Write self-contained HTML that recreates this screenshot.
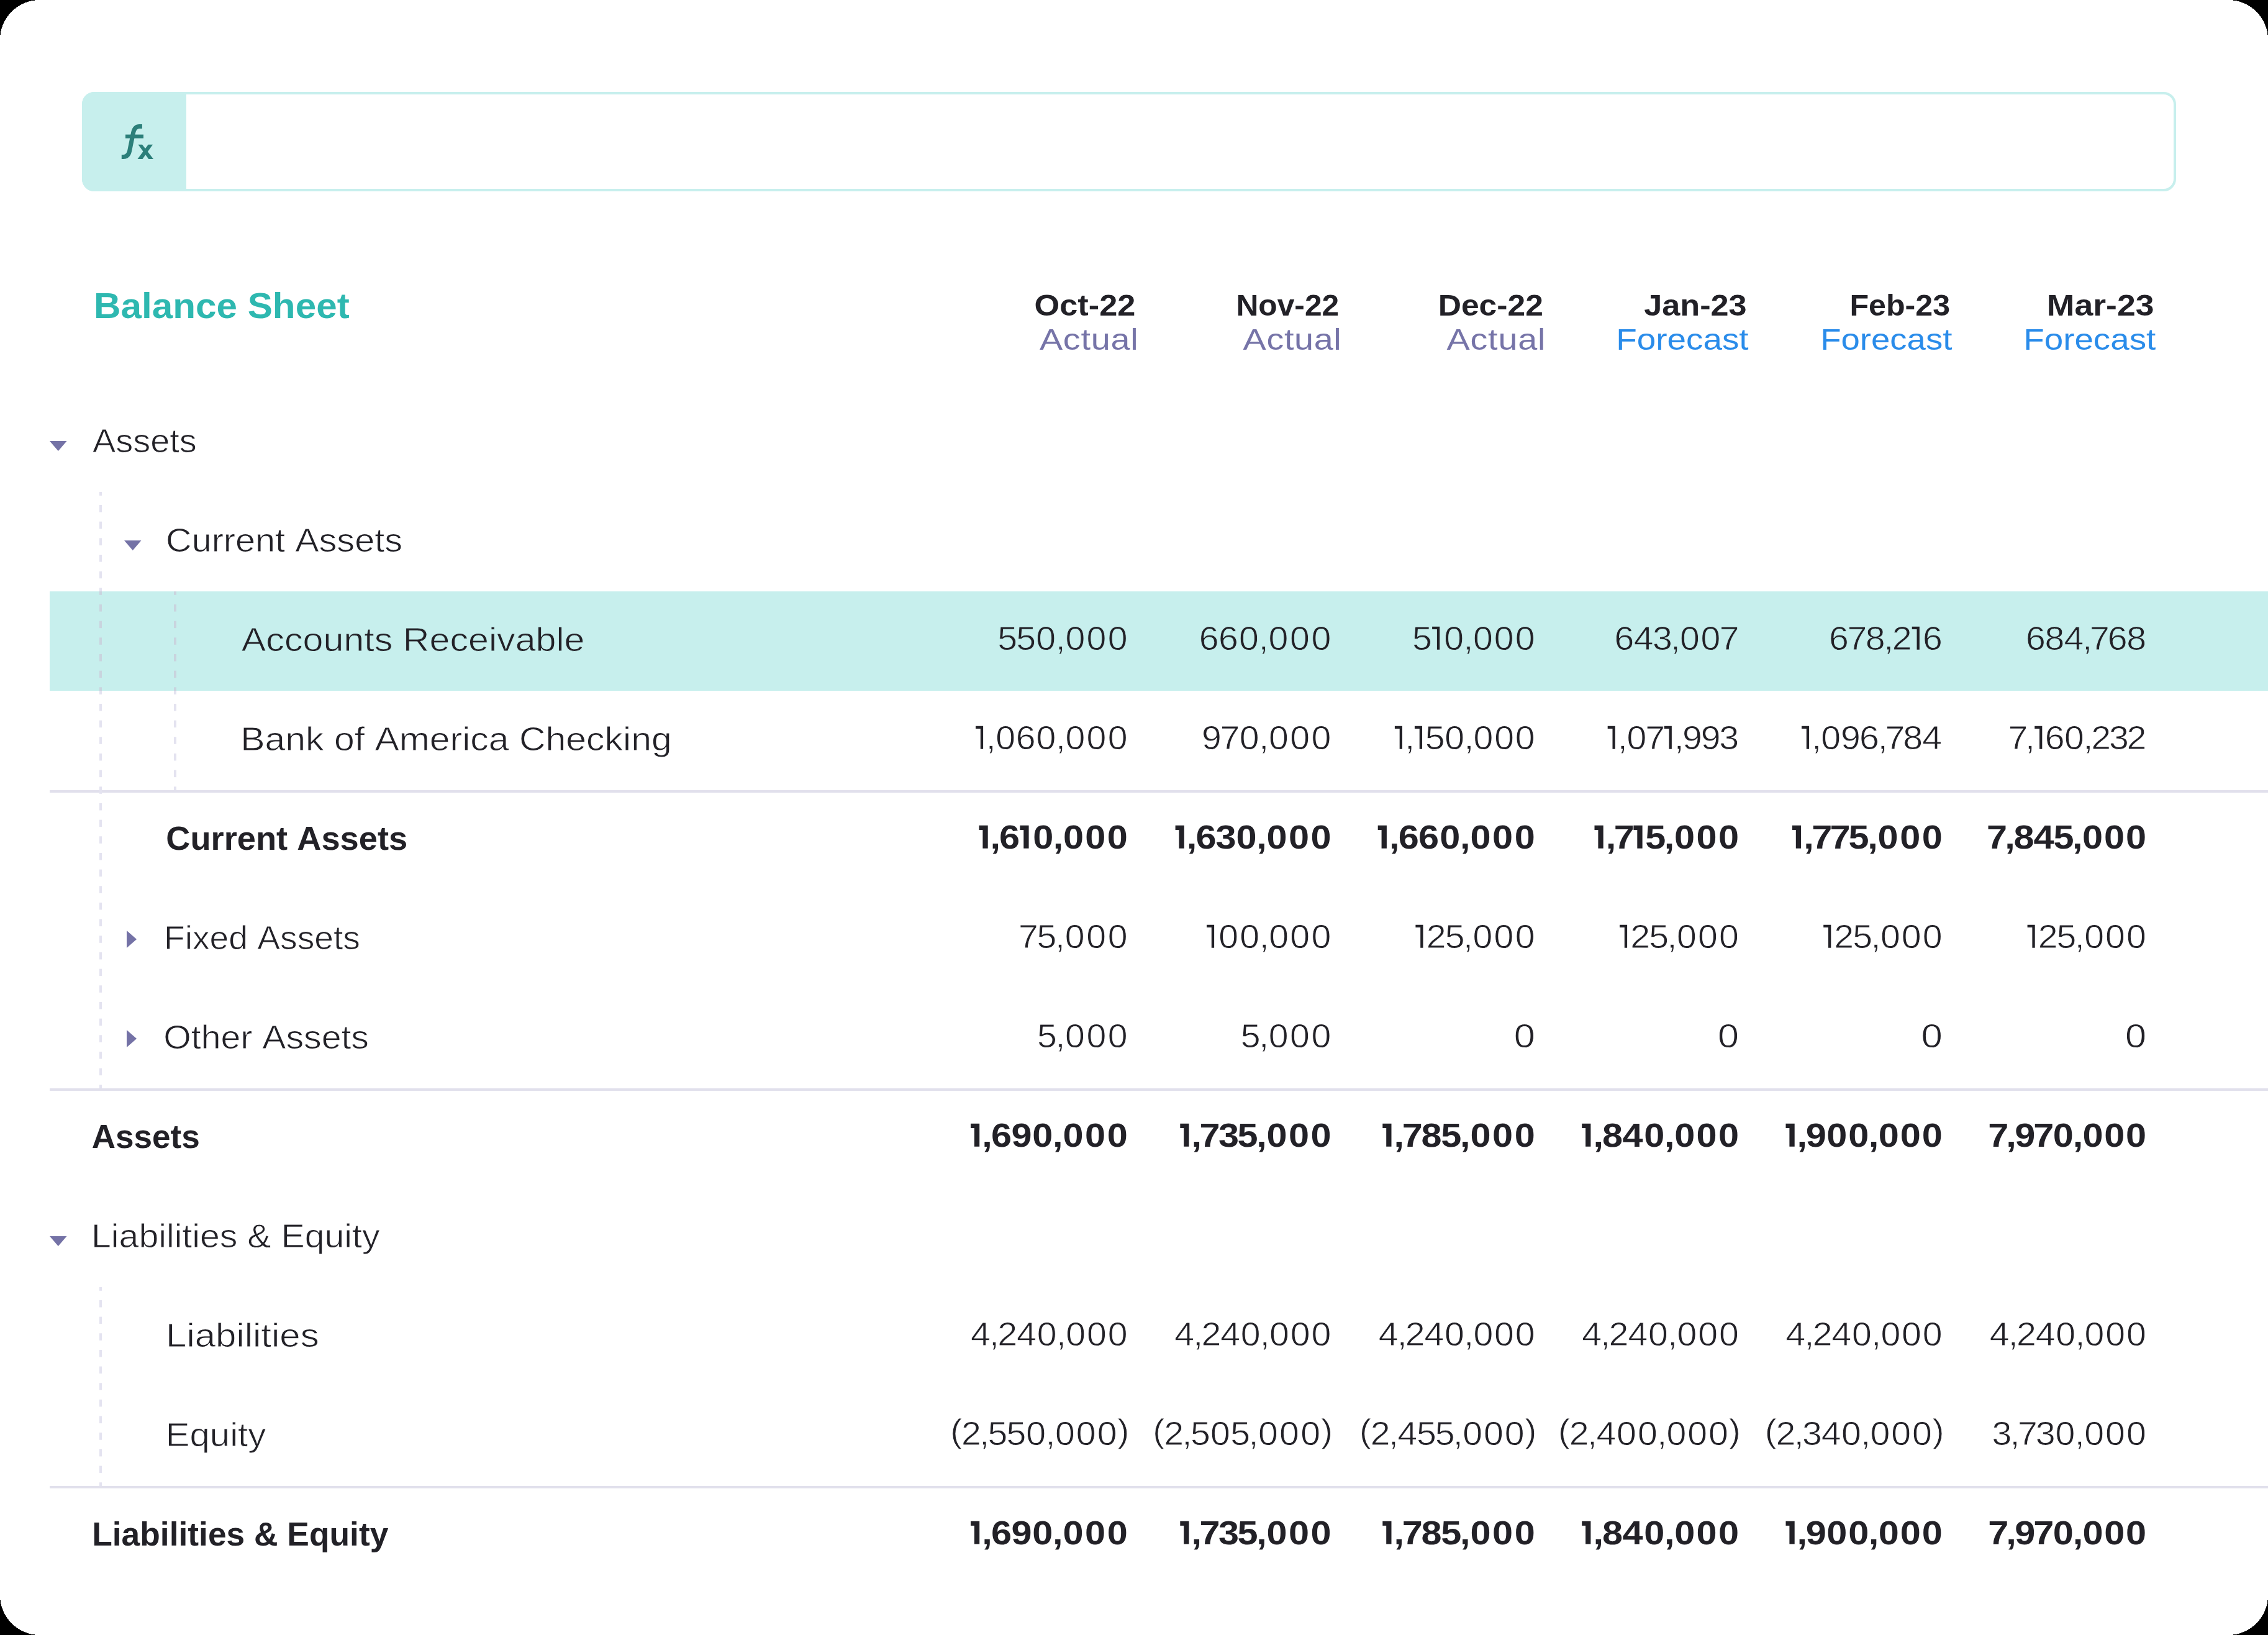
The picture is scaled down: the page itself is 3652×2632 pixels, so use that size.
<!DOCTYPE html>
<html><head><meta charset="utf-8"><style>
html,body{margin:0;padding:0;background:#000;width:3652px;height:2632px;overflow:hidden}
.card{position:absolute;left:0;top:0;width:3652px;height:2632px;background:#fff;overflow:hidden}
svg{position:absolute;left:0;top:0}
text{font-family:"Liberation Sans",sans-serif;font-kerning:none;white-space:pre}
</style></head><body><div class="card"><svg width="3652" height="2632" viewBox="0 0 3652 2632"><rect x="80" y="952" width="3572" height="160" fill="#C7EFED"/><rect x="80" y="1272" width="3572" height="4" fill="#E1E0EC"/><rect x="80" y="1752" width="3572" height="4" fill="#E1E0EC"/><rect x="80" y="2392" width="3572" height="4" fill="#E1E0EC"/><rect x="160" y="792.00" width="4" height="5.80" fill="#E4E3F0"/><rect x="160" y="812.97" width="4" height="11.50" fill="#E4E3F0"/><rect x="160" y="839.63" width="4" height="11.50" fill="#E4E3F0"/><rect x="160" y="866.30" width="4" height="11.50" fill="#E4E3F0"/><rect x="160" y="892.97" width="4" height="11.50" fill="#E4E3F0"/><rect x="160" y="919.63" width="4" height="11.50" fill="#E4E3F0"/><rect x="160" y="946.30" width="4" height="5.70" fill="#E4E3F0"/><rect x="160" y="952.00" width="4" height="5.80" fill="#C9D4DE"/><rect x="160" y="972.97" width="4" height="11.50" fill="#C9D4DE"/><rect x="160" y="999.63" width="4" height="11.50" fill="#C9D4DE"/><rect x="160" y="1026.30" width="4" height="11.50" fill="#C9D4DE"/><rect x="160" y="1052.97" width="4" height="11.50" fill="#C9D4DE"/><rect x="160" y="1079.63" width="4" height="11.50" fill="#C9D4DE"/><rect x="160" y="1106.30" width="4" height="5.70" fill="#C9D4DE"/><rect x="160" y="1112.00" width="4" height="5.80" fill="#E4E3F0"/><rect x="160" y="1132.97" width="4" height="11.50" fill="#E4E3F0"/><rect x="160" y="1159.63" width="4" height="11.50" fill="#E4E3F0"/><rect x="160" y="1186.30" width="4" height="11.50" fill="#E4E3F0"/><rect x="160" y="1212.97" width="4" height="11.50" fill="#E4E3F0"/><rect x="160" y="1239.63" width="4" height="11.50" fill="#E4E3F0"/><rect x="160" y="1266.30" width="4" height="11.50" fill="#E4E3F0"/><rect x="160" y="1292.97" width="4" height="11.50" fill="#E4E3F0"/><rect x="160" y="1319.63" width="4" height="11.50" fill="#E4E3F0"/><rect x="160" y="1346.30" width="4" height="11.50" fill="#E4E3F0"/><rect x="160" y="1372.97" width="4" height="11.50" fill="#E4E3F0"/><rect x="160" y="1399.63" width="4" height="11.50" fill="#E4E3F0"/><rect x="160" y="1426.30" width="4" height="11.50" fill="#E4E3F0"/><rect x="160" y="1452.97" width="4" height="11.50" fill="#E4E3F0"/><rect x="160" y="1479.63" width="4" height="11.50" fill="#E4E3F0"/><rect x="160" y="1506.30" width="4" height="11.50" fill="#E4E3F0"/><rect x="160" y="1532.97" width="4" height="11.50" fill="#E4E3F0"/><rect x="160" y="1559.63" width="4" height="11.50" fill="#E4E3F0"/><rect x="160" y="1586.30" width="4" height="11.50" fill="#E4E3F0"/><rect x="160" y="1612.97" width="4" height="11.50" fill="#E4E3F0"/><rect x="160" y="1639.63" width="4" height="11.50" fill="#E4E3F0"/><rect x="160" y="1666.30" width="4" height="11.50" fill="#E4E3F0"/><rect x="160" y="1692.97" width="4" height="11.50" fill="#E4E3F0"/><rect x="160" y="1719.63" width="4" height="11.50" fill="#E4E3F0"/><rect x="160" y="1746.30" width="4" height="5.70" fill="#E4E3F0"/><rect x="280" y="952.00" width="4" height="5.80" fill="#C9D4DE"/><rect x="280" y="972.97" width="4" height="11.50" fill="#C9D4DE"/><rect x="280" y="999.63" width="4" height="11.50" fill="#C9D4DE"/><rect x="280" y="1026.30" width="4" height="11.50" fill="#C9D4DE"/><rect x="280" y="1052.97" width="4" height="11.50" fill="#C9D4DE"/><rect x="280" y="1079.63" width="4" height="11.50" fill="#C9D4DE"/><rect x="280" y="1106.30" width="4" height="5.70" fill="#C9D4DE"/><rect x="280" y="1112.00" width="4" height="5.80" fill="#E4E3F0"/><rect x="280" y="1132.97" width="4" height="11.50" fill="#E4E3F0"/><rect x="280" y="1159.63" width="4" height="11.50" fill="#E4E3F0"/><rect x="280" y="1186.30" width="4" height="11.50" fill="#E4E3F0"/><rect x="280" y="1212.97" width="4" height="11.50" fill="#E4E3F0"/><rect x="280" y="1239.63" width="4" height="11.50" fill="#E4E3F0"/><rect x="280" y="1266.30" width="4" height="5.70" fill="#E4E3F0"/><rect x="160" y="2072.00" width="4" height="5.80" fill="#E4E3F0"/><rect x="160" y="2092.97" width="4" height="11.50" fill="#E4E3F0"/><rect x="160" y="2119.64" width="4" height="11.50" fill="#E4E3F0"/><rect x="160" y="2146.30" width="4" height="11.50" fill="#E4E3F0"/><rect x="160" y="2172.97" width="4" height="11.50" fill="#E4E3F0"/><rect x="160" y="2199.64" width="4" height="11.50" fill="#E4E3F0"/><rect x="160" y="2226.30" width="4" height="11.50" fill="#E4E3F0"/><rect x="160" y="2252.97" width="4" height="11.50" fill="#E4E3F0"/><rect x="160" y="2279.64" width="4" height="11.50" fill="#E4E3F0"/><rect x="160" y="2306.30" width="4" height="11.50" fill="#E4E3F0"/><rect x="160" y="2332.97" width="4" height="11.50" fill="#E4E3F0"/><rect x="160" y="2359.64" width="4" height="11.50" fill="#E4E3F0"/><rect x="160" y="2386.30" width="4" height="5.70" fill="#E4E3F0"/><path d="M80 710H107.5L93.75 726Z" fill="#7472A6"/><path d="M200 870H227.5L213.75 886Z" fill="#7472A6"/><path d="M80 1990H107.5L93.75 2006Z" fill="#7472A6"/><path d="M204 1498L220 1512.0L204 1526Z" fill="#7472A6"/><path d="M204 1658L220 1672.0L204 1686Z" fill="#7472A6"/><rect x="134" y="150" width="3368" height="156" rx="18" ry="18" fill="#fff" stroke="#C7EFED" stroke-width="4"/><path d="M152 148H300V308H152A20 20 0 0 1 132 288V168A20 20 0 0 1 152 148Z" fill="#C7EFED"/><path d="M195.8 252.4H198.8C204.5 252.4 207.3 249 208.6 243L214.6 213.5C216.1 206.5 219.6 203.5 224.5 203.5H228.9" fill="none" stroke="#2C7F7A" stroke-width="7"/><rect x="202" y="216.6" width="29" height="6" fill="#2C7F7A"/><path d="M222.5 232.7H229L247 256H239.3Z" fill="#2C7F7A"/><path d="M238.7 232.7H246L229.5 256H221.5Z" fill="#2C7F7A"/><text x="141.87" y="512.00" font-size="56.60" font-weight="700" fill="#2EB8B0" letter-spacing="0.000" transform="scale(1.0642,1)">Balance Sheet</text><text x="1552.47" y="508.50" font-size="48.80" font-weight="700" fill="#222127" letter-spacing="0.000" transform="scale(1.0728,1)">Oct-22</text><text x="1455.56" y="563.00" font-size="48.50" font-weight="400" fill="#7674A8" letter-spacing="0.665" transform="scale(1.1500,1)">Actual</text><text x="1953.32" y="508.50" font-size="48.80" font-weight="700" fill="#222127" letter-spacing="0.000" transform="scale(1.0190,1)">Nov-22</text><text x="1740.51" y="563.00" font-size="48.50" font-weight="400" fill="#7674A8" letter-spacing="0.543" transform="scale(1.1500,1)">Actual</text><text x="2190.15" y="508.50" font-size="48.80" font-weight="700" fill="#222127" letter-spacing="0.000" transform="scale(1.0573,1)">Dec-22</text><text x="2025.64" y="563.00" font-size="48.50" font-weight="400" fill="#7674A8" letter-spacing="0.683" transform="scale(1.1500,1)">Actual</text><text x="2473.53" y="508.50" font-size="48.80" font-weight="700" fill="#222127" letter-spacing="0.000" transform="scale(1.0702,1)">Jan-23</text><text x="2299.54" y="563.00" font-size="48.50" font-weight="400" fill="#2A8CEA" letter-spacing="0.000" transform="scale(1.1316,1)">Forecast</text><text x="2897.88" y="508.50" font-size="48.80" font-weight="700" fill="#222127" letter-spacing="0.000" transform="scale(1.0278,1)">Feb-23</text><text x="2606.45" y="563.00" font-size="48.50" font-weight="400" fill="#2A8CEA" letter-spacing="-0.000" transform="scale(1.1246,1)">Forecast</text><text x="3003.62" y="508.50" font-size="48.80" font-weight="700" fill="#222127" letter-spacing="0.000" transform="scale(1.0973,1)">Mar-23</text><text x="2886.26" y="563.00" font-size="48.50" font-weight="400" fill="#2A8CEA" letter-spacing="-0.000" transform="scale(1.1289,1)">Forecast</text><text x="141.02" y="728.00" font-size="53.00" font-weight="400" fill="#222127" letter-spacing="0.000" transform="scale(1.0558,1)" stroke="#fff" stroke-width="0.8">Assets</text><text x="245.69" y="888.00" font-size="53.00" font-weight="400" fill="#222127" letter-spacing="0.000" transform="scale(1.0870,1)" stroke="#fff" stroke-width="0.8">Current Assets</text><text x="348.21" y="1048.00" font-size="53.00" font-weight="400" fill="#222127" letter-spacing="0.000" transform="scale(1.1168,1)" stroke="#C7EFED" stroke-width="0.8">Accounts Receivable</text><text x="348.08" y="1208.00" font-size="53.00" font-weight="400" fill="#222127" letter-spacing="0.000" transform="scale(1.1123,1)" stroke="#fff" stroke-width="0.8">Bank of America Checking</text><text x="261.09" y="1368.00" font-size="53.00" font-weight="700" fill="#222127" letter-spacing="0.000" transform="scale(1.0237,1)">Current Assets</text><text x="253.41" y="1528.00" font-size="53.00" font-weight="400" fill="#222127" letter-spacing="0.000" transform="scale(1.0417,1)" stroke="#fff" stroke-width="0.8">Fixed Assets</text><text x="243.83" y="1688.00" font-size="53.00" font-weight="400" fill="#222127" letter-spacing="0.000" transform="scale(1.0798,1)" stroke="#fff" stroke-width="0.8">Other Assets</text><text x="147.45" y="1848.00" font-size="53.00" font-weight="700" fill="#222127" letter-spacing="0.000" transform="scale(1.0016,1)">Assets</text><text x="136.06" y="2008.00" font-size="53.00" font-weight="400" fill="#222127" letter-spacing="0.000" transform="scale(1.0804,1)" stroke="#fff" stroke-width="0.8">Liabilities &amp; Equity</text><text x="236.13" y="2168.00" font-size="53.00" font-weight="400" fill="#222127" letter-spacing="0.000" transform="scale(1.1311,1)" stroke="#fff" stroke-width="0.8">Liabilities</text><text x="243.41" y="2328.00" font-size="53.00" font-weight="400" fill="#222127" letter-spacing="0.000" transform="scale(1.0962,1)" stroke="#fff" stroke-width="0.8">Equity</text><text x="147.26" y="2488.00" font-size="53.00" font-weight="700" fill="#222127" letter-spacing="0.000" transform="scale(1.0066,1)">Liabilities &amp; Equity</text><text x="1515.39 1543.69 1573.90 1603.62 1618.31 1650.53 1682.74" y="1045.80 1045.80 1045.80 1045.80 1045.80 1045.80 1045.80" font-size="54.00" font-weight="400" fill="#222127" transform="scale(1.0600,1)" stroke="#C7EFED" stroke-width="0.8">550,000</text><text x="1821.41 1850.94 1882.13 1912.04 1926.92 1959.40 1991.89" y="1045.80 1045.80 1045.80 1045.80 1045.80 1045.80 1045.80" font-size="54.00" font-weight="400" fill="#222127" transform="scale(1.0600,1)" stroke="#C7EFED" stroke-width="0.8">660,000</text><text x="2145.29 2193.65 2223.19 2237.70 2269.65 2301.61" y="1045.80 1045.80 1045.80 1045.80 1045.80 1045.80" font-size="54.00" font-weight="400" fill="#222127" transform="scale(1.0600,1)" stroke="#C7EFED" stroke-width="0.8">50,000</text><path d="M2306.11 1008.65H2318.21V1045.80H2313.91V1013.05H2306.11Z" fill="#222127"/><text x="2452.35 2481.84 2510.48 2537.66 2551.87 2583.39 2612.02" y="1045.80 1045.80 1045.80 1045.80 1045.80 1045.80 1045.80" font-size="54.00" font-weight="400" fill="#222127" transform="scale(1.0600,1)" stroke="#C7EFED" stroke-width="0.8">643,007</text><text x="2778.39 2806.07 2833.62 2861.66 2874.18 2920.83" y="1045.80 1045.80 1045.80 1045.80 1045.80 1045.80" font-size="54.00" font-weight="400" fill="#222127" transform="scale(1.0600,1)" stroke="#C7EFED" stroke-width="0.8">678,26</text><path d="M3078.73 1008.65H3090.83V1045.80H3086.53V1013.05H3078.73Z" fill="#222127"/><text x="3077.45 3106.17 3135.36 3163.40 3174.65 3201.61 3230.33" y="1045.80 1045.80 1045.80 1045.80 1045.80 1045.80 1045.80" font-size="54.00" font-weight="400" fill="#222127" transform="scale(1.0600,1)" stroke="#C7EFED" stroke-width="0.8">684,768</text><text x="1497.87 1512.54 1543.08 1573.99 1603.69 1618.37 1650.55 1682.74" y="1205.80 1205.80 1205.80 1205.80 1205.80 1205.80 1205.80 1205.80" font-size="54.00" font-weight="400" fill="#222127" transform="scale(1.0600,1)" stroke="#fff" stroke-width="0.8">,060,000</text><path d="M1571.00 1168.65H1583.10V1205.80H1578.80V1173.05H1571.00Z" fill="#222127"/><text x="1825.49 1853.35 1882.74 1912.53 1927.28 1959.58 1991.89" y="1205.80 1205.80 1205.80 1205.80 1205.80 1205.80 1205.80" font-size="54.00" font-weight="400" fill="#222127" transform="scale(1.0600,1)" stroke="#fff" stroke-width="0.8">970,000</text><text x="2134.28 2164.95 2194.64 2223.98 2238.29 2269.95 2301.61" y="1205.80 1205.80 1205.80 1205.80 1205.80 1205.80 1205.80" font-size="54.00" font-weight="400" fill="#222127" transform="scale(1.0600,1)" stroke="#fff" stroke-width="0.8">,50,000</text><path d="M2245.90 1168.65H2258.00V1205.80H2253.70V1173.05H2245.90Z" fill="#222127"/><path d="M2277.93 1168.65H2290.03V1205.80H2285.73V1173.05H2277.93Z" fill="#222127"/><text x="2457.30 2471.15 2499.29 2543.22 2555.67 2583.84 2611.68" y="1205.80 1205.80 1205.80 1205.80 1205.80 1205.80 1205.80" font-size="54.00" font-weight="400" fill="#222127" transform="scale(1.0600,1)" stroke="#fff" stroke-width="0.8">,07,993</text><path d="M2588.70 1168.65H2600.80V1205.80H2596.50V1173.05H2588.70Z" fill="#222127"/><path d="M2679.77 1168.65H2691.87V1205.80H2687.57V1173.05H2679.77Z" fill="#222127"/><text x="2752.15 2766.27 2796.24 2824.58 2852.49 2863.73 2890.86 2920.04" y="1205.80 1205.80 1205.80 1205.80 1205.80 1205.80 1205.80 1205.80" font-size="54.00" font-weight="400" fill="#222127" transform="scale(1.0600,1)" stroke="#fff" stroke-width="0.8">,096,784</text><path d="M2901.00 1168.65H2913.10V1205.80H2908.80V1173.05H2901.00Z" fill="#222127"/><text x="3050.44 3076.42 3106.31 3135.91 3164.67 3176.54 3203.78 3230.70" y="1205.80 1205.80 1205.80 1205.80 1205.80 1205.80 1205.80 1205.80" font-size="54.00" font-weight="400" fill="#222127" transform="scale(1.0600,1)" stroke="#fff" stroke-width="0.8">7,60,232</text><path d="M3276.24 1168.65H3288.34V1205.80H3284.04V1173.05H3276.24Z" fill="#222127"/><text x="1449.66 1462.85 1512.07 1541.67 1556.38 1588.51 1620.64" y="1365.80 1365.80 1365.80 1365.80 1365.80 1365.80 1365.80" font-size="54.00" font-weight="700" fill="#222127" transform="scale(1.1000,1)">,60,000</text><path d="M1576.50 1328.65H1590.70V1365.80H1582.40V1335.95H1576.50Z" fill="#222127"/><path d="M1642.37 1328.65H1656.57V1365.80H1648.27V1335.95H1642.37Z" fill="#222127"/><text x="1737.10 1750.37 1779.57 1809.56 1839.24 1854.03 1886.29 1918.55" y="1365.80 1365.80 1365.80 1365.80 1365.80 1365.80 1365.80 1365.80" font-size="54.00" font-weight="700" fill="#222127" transform="scale(1.1000,1)">,630,000</text><path d="M1892.60 1328.65H1906.80V1365.80H1898.50V1335.95H1892.60Z" fill="#222127"/><text x="2033.64 2047.01 2076.48 2107.47 2137.27 2152.17 2184.58 2217.00" y="1365.80 1365.80 1365.80 1365.80 1365.80 1365.80 1365.80 1365.80" font-size="54.00" font-weight="700" fill="#222127" transform="scale(1.1000,1)">,660,000</text><path d="M2218.70 1328.65H2232.90V1365.80H2224.60V1335.95H2218.70Z" fill="#222127"/><text x="2350.65 2362.50 2408.35 2436.21 2451.01 2483.28 2515.55" y="1365.80 1365.80 1365.80 1365.80 1365.80 1365.80 1365.80" font-size="54.00" font-weight="700" fill="#222127" transform="scale(1.1000,1)">,75,000</text><path d="M2567.50 1328.65H2581.70V1365.80H2573.40V1335.95H2567.50Z" fill="#222127"/><path d="M2630.42 1328.65H2644.62V1365.80H2636.32V1335.95H2630.42Z" fill="#222127"/><text x="2640.16 2652.07 2678.56 2705.92 2733.84 2748.71 2781.08 2813.46" y="1365.80 1365.80 1365.80 1365.80 1365.80 1365.80 1365.80 1365.80" font-size="54.00" font-weight="700" fill="#222127" transform="scale(1.1000,1)">,775,000</text><path d="M2885.90 1328.65H2900.10V1365.80H2891.80V1335.95H2885.90Z" fill="#222127"/><text x="2908.23 2934.73 2947.71 2976.89 3006.01 3033.59 3048.08 3079.90 3111.73" y="1365.80 1365.80 1365.80 1365.80 1365.80 1365.80 1365.80 1365.80 1365.80" font-size="54.00" font-weight="700" fill="#222127" transform="scale(1.1000,1)">7,845,000</text><text x="1547.23 1574.90 1602.81 1617.71 1650.22 1682.74" y="1525.80 1525.80 1525.80 1525.80 1525.80 1525.80" font-size="54.00" font-weight="400" fill="#222127" transform="scale(1.0600,1)" stroke="#fff" stroke-width="0.8">75,000</text><text x="1851.24 1883.36 1913.02 1927.65 1959.77 1991.89" y="1525.80 1525.80 1525.80 1525.80 1525.80 1525.80" font-size="54.00" font-weight="400" fill="#222127" transform="scale(1.0600,1)" stroke="#fff" stroke-width="0.8">00,000</text><path d="M1943.00 1488.65H1955.10V1525.80H1950.80V1493.05H1943.00Z" fill="#222127"/><text x="2166.67 2194.98 2222.66 2237.31 2269.46 2301.61" y="1525.80 1525.80 1525.80 1525.80 1525.80 1525.80" font-size="54.00" font-weight="400" fill="#222127" transform="scale(1.0600,1)" stroke="#fff" stroke-width="0.8">25,000</text><path d="M2279.40 1488.65H2291.50V1525.80H2287.20V1493.05H2279.40Z" fill="#222127"/><text x="2476.64 2504.91 2532.57 2547.19 2579.30 2611.42" y="1525.80 1525.80 1525.80 1525.80 1525.80 1525.80" font-size="54.00" font-weight="400" fill="#222127" transform="scale(1.0600,1)" stroke="#fff" stroke-width="0.8">25,000</text><path d="M2608.00 1488.65H2620.10V1525.80H2615.80V1493.05H2608.00Z" fill="#222127"/><text x="2786.19 2814.38 2841.97 2856.53 2888.55 2920.57" y="1525.80 1525.80 1525.80 1525.80 1525.80 1525.80" font-size="54.00" font-weight="400" fill="#222127" transform="scale(1.0600,1)" stroke="#fff" stroke-width="0.8">25,000</text><path d="M2936.20 1488.65H2948.30V1525.80H2944.00V1493.05H2936.20Z" fill="#222127"/><text x="3095.96 3124.10 3151.65 3166.17 3198.13 3230.10" y="1525.80 1525.80 1525.80 1525.80 1525.80 1525.80" font-size="54.00" font-weight="400" fill="#222127" transform="scale(1.0600,1)" stroke="#fff" stroke-width="0.8">25,000</text><path d="M3264.60 1488.65H3276.70V1525.80H3272.40V1493.05H3264.60Z" fill="#222127"/><text x="1575.39 1603.20 1618.00 1650.37 1682.74" y="1685.80 1685.80 1685.80 1685.80 1685.80" font-size="54.00" font-weight="400" fill="#222127" transform="scale(1.0600,1)" stroke="#fff" stroke-width="0.8">5,000</text><text x="1884.63 1912.43 1927.21 1959.55 1991.89" y="1685.80 1685.80 1685.80 1685.80 1685.80" font-size="54.00" font-weight="400" fill="#222127" transform="scale(1.0600,1)" stroke="#fff" stroke-width="0.8">5,000</text><text x="2147.55" y="1685.80" font-size="54.00" font-weight="400" fill="#222127" letter-spacing="0.000" transform="scale(1.1351,1)" stroke="#fff" stroke-width="0.8">0</text><text x="2445.31" y="1685.80" font-size="54.00" font-weight="400" fill="#222127" letter-spacing="0.000" transform="scale(1.1312,1)" stroke="#fff" stroke-width="0.8">0</text><text x="2706.91" y="1685.80" font-size="54.00" font-weight="400" fill="#222127" letter-spacing="0.000" transform="scale(1.1428,1)" stroke="#fff" stroke-width="0.8">0</text><text x="3014.63" y="1685.80" font-size="54.00" font-weight="400" fill="#222127" letter-spacing="0.000" transform="scale(1.1351,1)" stroke="#fff" stroke-width="0.8">0</text><text x="1437.52 1450.87 1480.38 1511.25 1541.02 1555.89 1588.26 1620.64" y="1845.80 1845.80 1845.80 1845.80 1845.80 1845.80 1845.80 1845.80" font-size="54.00" font-weight="700" fill="#222127" transform="scale(1.1000,1)">,690,000</text><path d="M1563.00 1808.65H1577.20V1845.80H1568.90V1815.95H1563.00Z" fill="#222127"/><text x="1744.08 1755.91 1783.59 1811.48 1839.31 1854.08 1886.31 1918.55" y="1845.80 1845.80 1845.80 1845.80 1845.80 1845.80 1845.80 1845.80" font-size="54.00" font-weight="700" fill="#222127" transform="scale(1.1000,1)">,735,000</text><path d="M1900.30 1808.65H1914.50V1845.80H1906.20V1815.95H1900.30Z" fill="#222127"/><text x="2040.54 2052.48 2080.42 2109.34 2137.28 2152.18 2184.59 2217.00" y="1845.80 1845.80 1845.80 1845.80 1845.80 1845.80 1845.80 1845.80" font-size="54.00" font-weight="700" fill="#222127" transform="scale(1.1000,1)">,785,000</text><path d="M2226.30 1808.65H2240.50V1845.80H2232.20V1815.95H2226.30Z" fill="#222127"/><text x="2332.18 2345.44 2375.00 2406.58 2436.26 2451.05 2483.30 2515.55" y="1845.80 1845.80 1845.80 1845.80 1845.80 1845.80 1845.80 1845.80" font-size="54.00" font-weight="700" fill="#222127" transform="scale(1.1000,1)">,840,000</text><path d="M2547.20 1808.65H2561.40V1845.80H2553.10V1815.95H2547.20Z" fill="#222127"/><text x="2630.43 2643.53 2673.92 2705.78 2735.20 2749.72 2781.59 2813.46" y="1845.80 1845.80 1845.80 1845.80 1845.80 1845.80 1845.80 1845.80" font-size="54.00" font-weight="700" fill="#222127" transform="scale(1.1000,1)">,900,000</text><path d="M2875.50 1808.65H2889.70V1845.80H2881.40V1815.95H2875.50Z" fill="#222127"/><text x="2910.23 2936.55 2949.42 2976.59 3005.25 3034.43 3048.70 3080.22 3111.73" y="1845.80 1845.80 1845.80 1845.80 1845.80 1845.80 1845.80 1845.80 1845.80" font-size="54.00" font-weight="700" fill="#222127" transform="scale(1.1000,1)">7,970,000</text><text x="1474.52 1502.84 1515.35 1544.46 1575.16 1604.63 1619.06 1650.90 1682.74" y="2165.80 2165.80 2165.80 2165.80 2165.80 2165.80 2165.80 2165.80 2165.80" font-size="54.00" font-weight="400" fill="#222127" transform="scale(1.0600,1)" stroke="#fff" stroke-width="0.8">4,240,000</text><text x="1784.23 1812.50 1824.95 1853.99 1884.61 1914.01 1928.39 1960.14 1991.89" y="2165.80 2165.80 2165.80 2165.80 2165.80 2165.80 2165.80 2165.80 2165.80" font-size="54.00" font-weight="400" fill="#222127" transform="scale(1.0600,1)" stroke="#fff" stroke-width="0.8">4,240,000</text><text x="2094.04 2122.30 2134.75 2163.77 2194.37 2223.77 2238.13 2269.87 2301.61" y="2165.80 2165.80 2165.80 2165.80 2165.80 2165.80 2165.80 2165.80 2165.80" font-size="54.00" font-weight="400" fill="#222127" transform="scale(1.0600,1)" stroke="#fff" stroke-width="0.8">4,240,000</text><text x="2403.10 2431.44 2443.95 2473.08 2503.79 2533.27 2547.71 2579.56 2611.42" y="2165.80 2165.80 2165.80 2165.80 2165.80 2165.80 2165.80 2165.80 2165.80" font-size="54.00" font-weight="400" fill="#222127" transform="scale(1.0600,1)" stroke="#fff" stroke-width="0.8">4,240,000</text><text x="2712.82 2741.10 2753.56 2782.61 2813.24 2842.65 2857.04 2888.80 2920.57" y="2165.80 2165.80 2165.80 2165.80 2165.80 2165.80 2165.80 2165.80 2165.80" font-size="54.00" font-weight="400" fill="#222127" transform="scale(1.0600,1)" stroke="#fff" stroke-width="0.8">4,240,000</text><text x="3022.53 3050.80 3063.24 3092.26 3122.86 3152.26 3166.62 3198.36 3230.10" y="2165.80 2165.80 2165.80 2165.80 2165.80 2165.80 2165.80 2165.80 2165.80" font-size="54.00" font-weight="400" fill="#222127" transform="scale(1.0600,1)" stroke="#fff" stroke-width="0.8">4,240,000</text><text x="1443.54 1460.34 1487.95 1500.59 1528.68 1558.65 1588.20 1602.73 1634.69 1666.65 1697.44" y="2321.80 2325.80 2325.80 2325.80 2325.80 2325.80 2325.80 2325.80 2325.80 2325.80 2321.80" font-size="54.00" font-weight="400" fill="#222127" transform="scale(1.0600,1)" stroke="#fff" stroke-width="0.8">(2,550,000)</text><text x="1751.18 1768.11 1795.84 1808.60 1838.76 1869.02 1896.70 1911.35 1943.51 1975.66 2006.59" y="2321.80 2325.80 2325.80 2325.80 2325.80 2325.80 2325.80 2325.80 2325.80 2325.80 2321.80" font-size="54.00" font-weight="400" fill="#222127" transform="scale(1.0600,1)" stroke="#fff" stroke-width="0.8">(2,505,000)</text><text x="2065.14 2081.87 2109.42 2123.08 2151.93 2179.93 2207.42 2221.87 2253.73 2285.60 2316.31" y="2321.80 2325.80 2325.80 2325.80 2325.80 2325.80 2325.80 2325.80 2325.80 2325.80 2321.80" font-size="54.00" font-weight="400" fill="#222127" transform="scale(1.0600,1)" stroke="#fff" stroke-width="0.8">(2,455,000)</text><text x="2367.03 2383.78 2411.34 2425.02 2455.76 2487.65 2517.15 2531.62 2563.50 2595.39 2626.12" y="2321.80 2325.80 2325.80 2325.80 2325.80 2325.80 2325.80 2325.80 2325.80 2325.80 2321.80" font-size="54.00" font-weight="400" fill="#222127" transform="scale(1.0600,1)" stroke="#fff" stroke-width="0.8">(2,400,000)</text><text x="2680.99 2697.66 2725.15 2737.77 2766.66 2797.29 2826.71 2841.09 2872.86 2904.63 2935.27" y="2321.80 2325.80 2325.80 2325.80 2325.80 2325.80 2325.80 2325.80 2325.80 2325.80 2321.80" font-size="54.00" font-weight="400" fill="#222127" transform="scale(1.0600,1)" stroke="#fff" stroke-width="0.8">(2,340,000)</text><text x="3025.96 3053.41 3064.99 3092.28 3122.14 3151.68 3166.19 3198.15 3230.10" y="2325.80 2325.80 2325.80 2325.80 2325.80 2325.80 2325.80 2325.80 2325.80" font-size="54.00" font-weight="400" fill="#222127" transform="scale(1.0600,1)" stroke="#fff" stroke-width="0.8">3,730,000</text><text x="1437.52 1450.87 1480.38 1511.25 1541.02 1555.89 1588.26 1620.64" y="2485.80 2485.80 2485.80 2485.80 2485.80 2485.80 2485.80 2485.80" font-size="54.00" font-weight="700" fill="#222127" transform="scale(1.1000,1)">,690,000</text><path d="M1563.00 2448.65H1577.20V2485.80H1568.90V2455.95H1563.00Z" fill="#222127"/><text x="1744.08 1755.91 1783.59 1811.48 1839.31 1854.08 1886.31 1918.55" y="2485.80 2485.80 2485.80 2485.80 2485.80 2485.80 2485.80 2485.80" font-size="54.00" font-weight="700" fill="#222127" transform="scale(1.1000,1)">,735,000</text><path d="M1900.30 2448.65H1914.50V2485.80H1906.20V2455.95H1900.30Z" fill="#222127"/><text x="2040.54 2052.48 2080.42 2109.34 2137.28 2152.18 2184.59 2217.00" y="2485.80 2485.80 2485.80 2485.80 2485.80 2485.80 2485.80 2485.80" font-size="54.00" font-weight="700" fill="#222127" transform="scale(1.1000,1)">,785,000</text><path d="M2226.30 2448.65H2240.50V2485.80H2232.20V2455.95H2226.30Z" fill="#222127"/><text x="2332.18 2345.44 2375.00 2406.58 2436.26 2451.05 2483.30 2515.55" y="2485.80 2485.80 2485.80 2485.80 2485.80 2485.80 2485.80 2485.80" font-size="54.00" font-weight="700" fill="#222127" transform="scale(1.1000,1)">,840,000</text><path d="M2547.20 2448.65H2561.40V2485.80H2553.10V2455.95H2547.20Z" fill="#222127"/><text x="2630.43 2643.53 2673.92 2705.78 2735.20 2749.72 2781.59 2813.46" y="2485.80 2485.80 2485.80 2485.80 2485.80 2485.80 2485.80 2485.80" font-size="54.00" font-weight="700" fill="#222127" transform="scale(1.1000,1)">,900,000</text><path d="M2875.50 2448.65H2889.70V2485.80H2881.40V2455.95H2875.50Z" fill="#222127"/><text x="2910.23 2936.55 2949.42 2976.59 3005.25 3034.43 3048.70 3080.22 3111.73" y="2485.80 2485.80 2485.80 2485.80 2485.80 2485.80 2485.80 2485.80 2485.80" font-size="54.00" font-weight="700" fill="#222127" transform="scale(1.1000,1)">7,970,000</text><path shape-rendering="crispEdges" fill="#000" d="M0 0H64A64 64 0 0 0 0 64Z M3652 0V64A64 64 0 0 0 3588 0Z M3652 2632H3588A64 64 0 0 0 3652 2568Z M0 2632V2568A64 64 0 0 0 64 2632Z"/></svg></div></body></html>
